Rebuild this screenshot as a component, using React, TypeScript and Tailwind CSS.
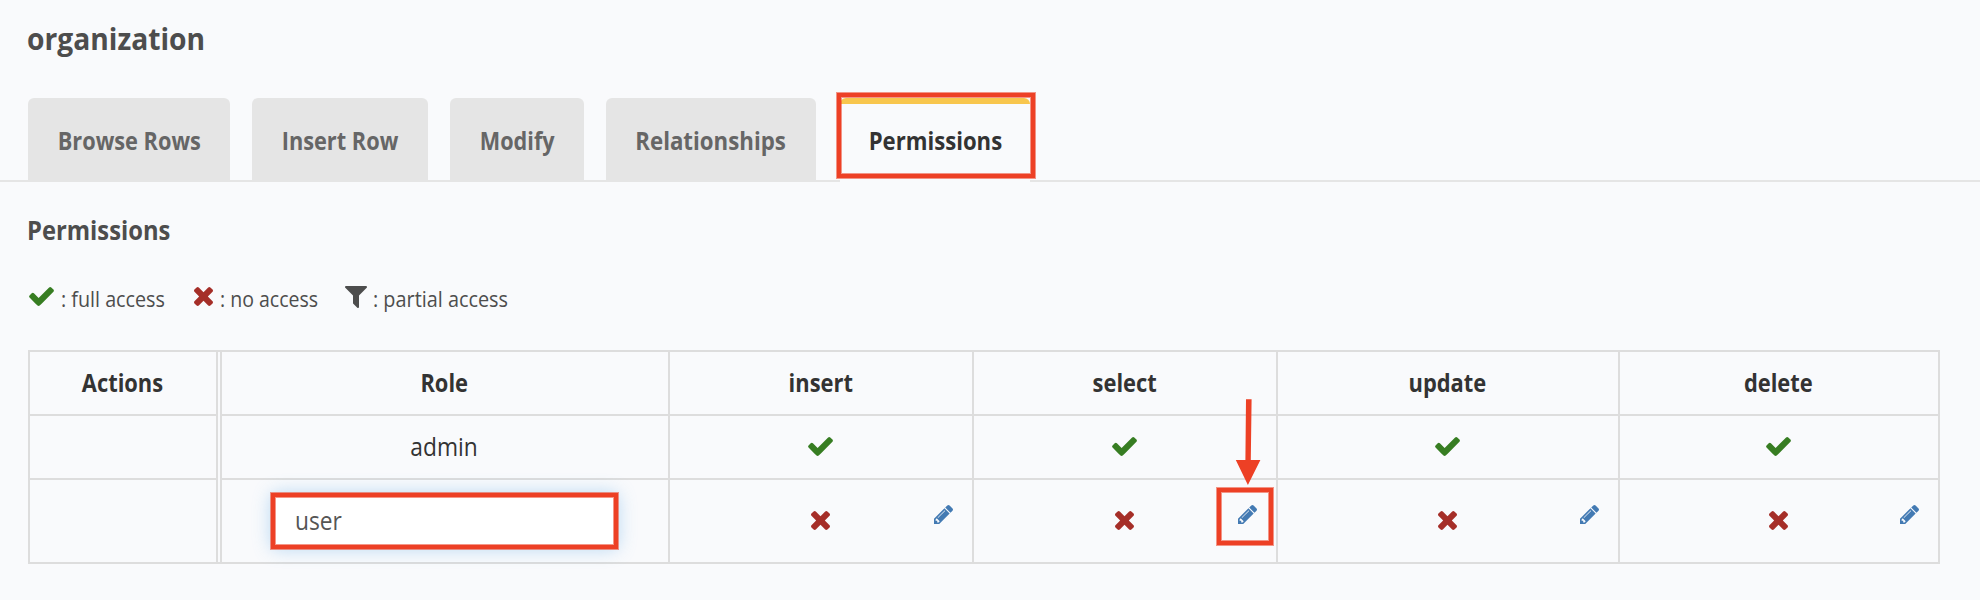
import type { ReactNode } from "react"

const TABS = [
    { label: "Browse Rows", box: "w-[202px]", scale: "scale-x-[0.87]" },
    { label: "Insert Row", box: "w-[176px]", scale: "scale-x-[0.87]" },
    { label: "Modify", box: "w-[134px]", scale: "scale-x-[0.865]" },
    { label: "Relationships", box: "w-[210px]", scale: "scale-x-[0.89]" },
]

const ACCESS_COLUMNS = [
    { name: "insert", box: "w-[304px]" },
    { name: "select", box: "w-[304px]" },
    { name: "update", box: "w-[342px]" },
    { name: "delete", box: "w-[320px]" },
]

function CheckIcon() {
    return (
        <svg viewBox="121 334 1550 1188" className="w-[25px] h-[19px] shrink-0 fill-[#377d22]">
            <path d="M1671 566q0 40-28 68l-724 724-136 136q-28 28-68 28t-68-28l-136-136-362-362q-28-28-28-68t28-68l136-136q28-28 68-28t68 28l294 295 656-657q28-28 68-28t68 28l136 136q28 28 28 68z" />
        </svg>
    )
}

function TimesIcon() {
    return (
        <svg viewBox="302 366 1188 1188" className="size-[19px] shrink-0 fill-[#a52e28]">
            <path d="M1490 1322q0 40-28 68l-136 136q-28 28-68 28t-68-28l-294-294-294 294q-28 28-68 28t-68-28l-136-136q-28-28-28-68t28-68l294-294-294-294q-28-28-28-68t28-68l136-136q28-28 68-28t68 28l294 294 294-294q28-28 68-28t68 28l136 136q28 28 28 68t-28 68l-294 294 294 294q28 28 28 68z" />
        </svg>
    )
}

function FilterIcon() {
    return (
        <svg viewBox="192 256 1408 1408" className="size-[22px] shrink-0 fill-[#4d4d4d]">
            <path d="M1595 295q17 41-14 70l-493 493v742q0 42-39 59-13 5-25 5-27 0-45-19l-256-256q-19-19-19-45v-486l-493-493q-31-29-14-70 17-39 59-39h1280q42 0 59 39z" />
        </svg>
    )
}

function PencilIcon() {
    return (
        <svg viewBox="128 149 1515 1515" className="size-[19px] shrink-0 fill-[#437ab3]">
            <path d="M491 1536l91-91-235-235-91 91v107h128v128h107zm523-928q0-22-22-22-10 0-17 7l-542 542q-7 7-7 17 0 22 22 22 10 0 17-7l542-542q7-7 7-17zm-54-192l416 416-832 832h-416v-416zm683 96q0 53-37 90l-166 166-416-416 166-165q36-38 90-38 53 0 91 38l235 234q37 38 37 91z" />
        </svg>
    )
}

function Highlight({ className }: { className: string }) {
    return (
        <div
            className={`absolute z-10 pointer-events-none border-4 border-[#ed4025] shadow-[0_0_0_1px_rgba(237,64,37,0.55),inset_0_0_0_1px_rgba(237,64,37,0.55)] ${className}`}
        />
    )
}

function HeadCell({ className, children }: { className: string; children: ReactNode }) {
    return (
        <div className={`flex items-center justify-center border-r-2 border-b-2 border-[#dddddd] h-[64px] text-[25px] font-bold text-[#333333] ${className}`}>
            <span className="scale-x-[0.875]">{children}</span>
        </div>
    )
}

export default function App() {
    return (
        <div className="w-[1980px] h-[600px] overflow-hidden bg-[#f9fafc] font-['Open_Sans','Noto_Sans',sans-serif] whitespace-nowrap text-[#4d4d4d]">
            <header className="h-[98px] pl-[27px] pt-[18px]">
                <h2 className="text-[31px] leading-[40px] font-bold origin-left scale-x-[0.91]">organization</h2>
            </header>

            <nav className="flex gap-[22px] h-[84px] pl-[28px] border-b-2 border-[#e5e5e5] text-[25px] font-bold">
                {TABS.map((tab) => (
                    <div key={tab.label} className={`flex items-center justify-center h-[82px] pt-[4px] rounded-t-[6px] bg-[#e5e5e5] text-[#666666] ${tab.box}`}>
                        <span className={tab.scale}>{tab.label}</span>
                    </div>
                ))}
                <div className="relative w-[192px] h-[84px]">
                    <div className="flex items-center justify-center ml-[2px] w-[190px] h-[84px] pb-[4px] rounded-t-[6px] border-t-[6px] border-[#f8c64d] bg-[#f9fafc] text-[#333333]">
                        <span className="scale-x-[0.885]">Permissions</span>
                    </div>
                    <Highlight className="-left-px -top-[5px] w-[198px] h-[85px]" />
                </div>
            </nav>

            <main className="pl-[28px]">
                <h3 className="-ml-px pt-[29px] text-[27px] leading-[38px] font-bold origin-left scale-x-[0.88]">Permissions</h3>

                <div className="flex items-center mt-[31px] ml-px h-[34px] text-[21px] leading-[34px]">
                    <div className="pb-[2px]"><CheckIcon /></div>
                    <span className="ml-[7px] pt-[3px] w-[124px]"><span className="inline-block origin-left scale-x-[0.94]">: full access</span></span>
                    <div className="ml-[9px] pb-[2px]"><TimesIcon /></div>
                    <span className="ml-[7px] pt-[3px] w-[125px]"><span className="inline-block origin-left scale-x-[0.93]">: no access</span></span>
                    <div className="pb-px"><FilterIcon /></div>
                    <span className="ml-[6px] pt-[3px]"><span className="inline-block origin-left scale-x-[0.945]">: partial access</span></span>
                </div>

                <div className="mt-[36px] w-[1912px] border-t-2 border-b-2 border-l-2 border-[#dddddd]">
                    <div className="flex">
                        <HeadCell className="w-[188px] pr-[2px]">Actions</HeadCell>
                        <HeadCell className="ml-[2px] w-[450px] pr-[2px] border-l-2">Role</HeadCell>
                        {ACCESS_COLUMNS.map((col) => (
                            <HeadCell key={col.name} className={`pr-px ${col.box}`}>{col.name}</HeadCell>
                        ))}
                    </div>

                    <div className="flex h-[64px]">
                        <div className="w-[188px] border-r-2 border-b-2 border-[#dddddd]" />
                        <div className="flex items-center justify-center ml-[2px] w-[450px] pr-[3px] border-l-2 border-r-2 border-b-2 border-[#dddddd] text-[25px] text-[#333333]">
                            <span className="scale-x-[0.91]">admin</span>
                        </div>
                        {ACCESS_COLUMNS.map((col) => (
                            <div key={col.name} className={`flex items-center justify-center pr-px pb-px border-r-2 border-b-2 border-[#dddddd] ${col.box}`}>
                                <CheckIcon />
                            </div>
                        ))}
                    </div>

                    <div className="flex h-[82px]">
                        <div className="w-[188px] border-r-2 border-[#dddddd]" />
                        <div className="ml-[2px] w-[450px] pl-[49px] pt-[13px] border-l-2 border-r-2 border-[#dddddd]">
                            <div className="relative flex items-center w-[347px] h-[56px] pl-[24px] rounded-[6px] bg-white shadow-[0_0_18px_rgba(102,175,233,0.45)] text-[25px] text-[#555555]">
                                <span className="origin-left scale-x-[0.91]">user</span>
                                <Highlight className="inset-0" />
                            </div>
                        </div>
                        {ACCESS_COLUMNS.map((col) => (
                            <div key={col.name} className={`relative grid grid-cols-[1fr_19px_1fr] items-center border-r-2 border-[#dddddd] ${col.box}`}>
                                <div className="col-start-2 -ml-px pb-[2px]">
                                    <TimesIcon />
                                </div>
                                <div className="justify-self-end self-start mt-[25px] mr-[19px]">
                                    <PencilIcon />
                                </div>
                                {col.name === "select" && (
                                    <>
                                        <Highlight className="right-[3px] top-[8px] w-[56px] h-[57px]" />
                                        <svg viewBox="0 0 26 88" className="absolute z-10 right-[15px] -top-[82px] w-[26px] h-[88px] fill-[#ed4025]">
                                            <path d="M11 1.2h5.6L15.8 62h9.6L12.9 87 0.8 62h9.6z" />
                                        </svg>
                                    </>
                                )}
                            </div>
                        ))}
                    </div>
                </div>
            </main>
        </div>
    )
}
